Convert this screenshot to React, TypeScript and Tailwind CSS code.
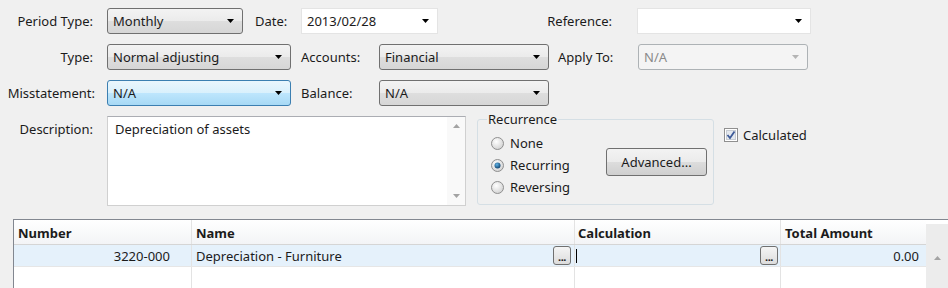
import React from 'react';

const FONT = "font-['Noto_Sans','Open_Sans',sans-serif]";

const Arrow: React.FC<{ color?: string }> = ({ color = '#000' }) => (
  <svg width="7" height="4" viewBox="0 0 7 4" className="shrink-0">
    <path d="M0 0 H7 L3.5 4 Z" fill={color} />
  </svg>
);

type ComboKind = 'normal' | 'hover' | 'disabled' | 'flat';

const COMBO_STYLE: Record<ComboKind, string> = {
  normal:
    'border border-[#707070] rounded-[3px] bg-[linear-gradient(to_bottom,#f3f3f3_0%,#ebebeb_50%,#dedede_50%,#d6d6d6_100%)]',
  hover:
    'border border-[#3c7fb1] rounded-[3px] bg-[linear-gradient(to_bottom,#eaf6fd_0%,#d9f0fc_50%,#bee6fd_50%,#a7d9f5_100%)]',
  disabled: 'border border-[#adb2b5] rounded-[3px] bg-[#f4f4f4] text-[#8a8a8a]',
  flat: 'border border-[#e4e4e4] bg-white',
};

const Combo: React.FC<{ value?: string; width: string; kind?: ComboKind; className?: string }> = ({
  value = '',
  width,
  kind = 'normal',
  className = '',
}) => (
  <div className={`${width} h-[26px] flex items-center pl-[5px] pr-[8px] ${COMBO_STYLE[kind]} ${className}`}>
    <span className="flex-1 truncate">{value}</span>
    <Arrow color={kind === 'disabled' ? '#b4b4b4' : '#000'} />
  </div>
);

const Radio: React.FC<{ checked?: boolean; label: string }> = ({ checked, label }) => (
  <div className="h-[22px] flex items-center gap-[6px]">
    <svg width="13" height="13" viewBox="0 0 13 13">
      <defs>
        <radialGradient id="rg" cx="40%" cy="35%" r="70%">
          <stop offset="0%" stopColor="#ffffff" />
          <stop offset="100%" stopColor="#d0d0d0" />
        </radialGradient>
        <radialGradient id="dot" cx="40%" cy="35%" r="70%">
          <stop offset="0%" stopColor="#5fb3e6" />
          <stop offset="100%" stopColor="#0f3e69" />
        </radialGradient>
      </defs>
      <circle cx="6.5" cy="6.5" r="6" fill="url(#rg)" stroke="#8f8f8f" />
      {checked && <circle cx="6.5" cy="6.5" r="3" fill="url(#dot)" />}
    </svg>
    <span>{label}</span>
  </div>
);

const DotsButton: React.FC = () => (
  <div className="w-[18px] h-[19px] border border-[#707070] rounded-[3px] bg-[linear-gradient(to_bottom,#f5f5f5,#dcdcdc)] flex items-end justify-center pb-[3px]">
    <span className="text-[11px] leading-[8px] font-bold tracking-[-0.5px]">...</span>
  </div>
);

export default function App() {
  return (
    <div className={`w-[948px] h-[288px] bg-[#f0f0f0] overflow-hidden text-[13px] leading-[18px] text-[#1b1b1b] ${FONT}`}>
      {/* form rows */}
      <div className="pt-[8px] flex flex-col gap-[10px]">
        <div className="h-[26px] flex items-center">
          <div className="w-[93px] text-right">Period Type:</div>
          <Combo value="Monthly" width="w-[136px]" className="ml-[14px]" />
          <div className="w-[58px] pl-[12px]">Date:</div>
          <Combo value="2013/02/28" width="w-[137px]" kind="flat" />
          <div className="w-[199px] text-right pr-[25px]">Reference:</div>
          <Combo width="w-[174px]" kind="flat" />
        </div>
        <div className="h-[26px] flex items-center">
          <div className="w-[93px] text-right">Type:</div>
          <Combo value="Normal adjusting" width="w-[184px]" className="ml-[14px]" />
          <div className="w-[88px] pl-[10px]">Accounts:</div>
          <Combo value="Financial" width="w-[170px]" />
          <div className="w-[89px] pl-[9px]">Apply To:</div>
          <Combo value="N/A" width="w-[170px]" kind="disabled" />
        </div>
        <div className="h-[26px] flex items-center">
          <div className="w-[95px] text-right">Misstatement:</div>
          <Combo value="N/A" width="w-[184px]" kind="hover" className="ml-[12px]" />
          <div className="w-[88px] pl-[10px]">Balance:</div>
          <Combo value="N/A" width="w-[170px]" />
        </div>
      </div>

      {/* description / recurrence */}
      <div className="mt-[10px] flex items-start">
        <div className="w-[93px] text-right pt-[4px]">Description:</div>
        <div className="ml-[14px] w-[359px] h-[90px] bg-white border border-[#d0d0d0] border-t-[#abadb3] flex">
          <div className="flex-1 pl-[7px] pt-[3px]">Depreciation of assets</div>
          <div className="w-[18px] bg-[#f9f9f9] flex flex-col items-center justify-between py-[7px]">
            <svg width="7" height="4" viewBox="0 0 7 4">
              <path d="M0 4 H7 L3.5 0 Z" fill="#a3a3a3" />
            </svg>
            <svg width="7" height="4" viewBox="0 0 7 4">
              <path d="M0 0 H7 L3.5 4 Z" fill="#a3a3a3" />
            </svg>
          </div>
        </div>

        <fieldset className="ml-[11px] -mt-[6px] w-[237px] h-[95px] border border-[#d5dfe5] rounded-[3px] pl-[13px]">
          <legend className="ml-[-4px] px-[1px]">Recurrence</legend>
          <div className="flex items-start pt-[4px]">
            <div className="w-[115px] flex flex-col">
              <Radio label="None" />
              <Radio label="Recurring" checked />
              <Radio label="Reversing" />
            </div>
            <div className="mt-[16px] w-[101px] h-[28px] border border-[#707070] rounded-[3px] bg-[linear-gradient(to_bottom,#f3f3f3_0%,#ebebeb_50%,#dddddd_50%,#cfcfcf_100%)] flex items-center justify-center">
              Advanced...
            </div>
          </div>
        </fieldset>

        <div className="ml-[10px] mt-[10px] h-[18px] flex items-center gap-[5px]">
          <svg width="14" height="14" viewBox="0 0 14 14">
            <rect x="0.5" y="0.5" width="13" height="13" fill="#fff" stroke="#8f8f8f" />
            <rect x="2.5" y="2.5" width="9" height="9" fill="#e4e8ee" stroke="#c7ccd3" />
            <path d="M3.5 7 L6 10 L10.5 3.5" fill="none" stroke="#3d5a98" strokeWidth="1.8" />
          </svg>
          <span>Calculated</span>
        </div>
      </div>

      {/* grid */}
      <div className="mt-[13px] ml-[13px] w-[935px] h-[70px] bg-white border-l border-t border-[#828790] flex overflow-hidden">
        <div className="flex flex-col">
          <div className="h-[25px] flex font-bold bg-[linear-gradient(to_bottom,#ffffff,#f3f4f6)] border-b border-[#d5d5d5]">
            <div className="w-[178px] pl-[4px] pt-[4px] border-r border-[#e3e3e3]">Number</div>
            <div className="w-[383px] pl-[4px] pt-[4px] border-r border-[#e3e3e3]">Name</div>
            <div className="w-[206px] pl-[3px] pt-[4px] border-r border-[#e3e3e3]">Calculation</div>
            <div className="w-[145px] pl-[4px] pt-[4px]">Total Amount</div>
          </div>
          <div className="h-[22px] flex bg-[#e5f1fb] border-b border-[#e6e6e6]">
            <div className="w-[178px] pr-[21px] flex items-center justify-end border-r border-[#e3e3e3]">3220-000</div>
            <div className="w-[383px] pl-[4px] pr-[3px] flex items-center border-r border-[#e3e3e3]">
              <span className="flex-1">Depreciation - Furniture</span>
              <DotsButton />
            </div>
            <div className="w-[206px] pl-[1px] pr-[2px] flex items-center border-r border-[#e3e3e3]">
              <div className="flex-1">
                <div className="w-[1px] h-[14px] bg-black" />
              </div>
              <DotsButton />
            </div>
            <div className="w-[145px] pr-[7px] flex items-center justify-end">0.00</div>
          </div>
          <div className="h-[22px] flex">
            <div className="w-[178px] border-r border-[#e3e3e3]" />
            <div className="w-[383px] border-r border-[#e3e3e3]" />
            <div className="w-[206px] border-r border-[#e3e3e3]" />
            <div className="w-[145px]" />
          </div>
        </div>
        <div className="flex-1 mt-[4px] bg-[#ececec] flex justify-center pt-[32px]">
          <svg width="7" height="4" viewBox="0 0 7 4">
            <path d="M0 4 H7 L3.5 0 Z" fill="#a3a3a3" />
          </svg>
        </div>
      </div>
    </div>
  );
}
